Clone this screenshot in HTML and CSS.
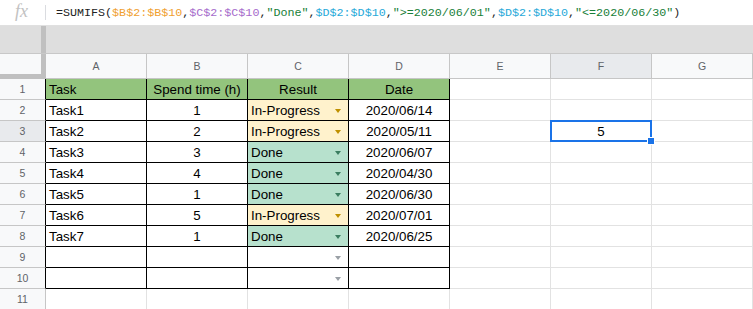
FILE: index.html
```html
<!DOCTYPE html>
<html lang="en">
<head>
    <meta charset="UTF-8">
    <title>SUMIFS - Sheet</title>
    <link rel="stylesheet" href="styles.css">
</head>
<body>
<div class="formula-bar">
    <span class="fx">fx</span>
    <span class="fx-sep"></span>
    <span class="formula">=SUMIFS(<span class="r1">$B$2:$B$10</span>,<span class="r2">$C$2:$C$10</span>,<span class="str">"Done"</span>,<span class="r3">$D$2:$D$10</span>,<span class="str">"&gt;=2020/06/01"</span>,<span class="r3">$D$2:$D$10</span>,<span class="str">"&lt;=2020/06/30"</span>)</span>
</div>
<div class="band"><div class="band-handle"></div></div>

<div class="sheet">
    <!-- column headers -->
    <div class="corner"></div>
    <div class="ch">A</div>
    <div class="ch">B</div>
    <div class="ch">C</div>
    <div class="ch">D</div>
    <div class="ch">E</div>
    <div class="ch active">F</div>
    <div class="ch">G</div>

    <!-- row 1 -->
    <div class="rh edge">1</div>
    <div class="cell t hd">Task</div>
    <div class="cell t hd c">Spend time (h)</div>
    <div class="cell t hd c">Result</div>
    <div class="cell t hd c">Date</div>
    <div class="cell"></div><div class="cell"></div><div class="cell"></div>

    <!-- row 2 -->
    <div class="rh edge">2</div>
    <div class="cell t">Task1</div>
    <div class="cell t c">1</div>
    <div class="cell t dd ip">In-Progress<span class="arrow"></span></div>
    <div class="cell t c">2020/06/14</div>
    <div class="cell"></div><div class="cell"></div><div class="cell"></div>

    <!-- row 3 -->
    <div class="rh edge active">3</div>
    <div class="cell t">Task2</div>
    <div class="cell t c">2</div>
    <div class="cell t dd ip">In-Progress<span class="arrow"></span></div>
    <div class="cell t c">2020/05/11</div>
    <div class="cell"></div>
    <div class="cell c selected">5<span class="sel-box"><span class="sel-handle"></span></span></div>
    <div class="cell"></div>

    <!-- row 4 -->
    <div class="rh edge">4</div>
    <div class="cell t">Task3</div>
    <div class="cell t c">3</div>
    <div class="cell t dd done">Done<span class="arrow"></span></div>
    <div class="cell t c">2020/06/07</div>
    <div class="cell"></div><div class="cell"></div><div class="cell"></div>

    <!-- row 5 -->
    <div class="rh edge">5</div>
    <div class="cell t">Task4</div>
    <div class="cell t c">4</div>
    <div class="cell t dd done">Done<span class="arrow"></span></div>
    <div class="cell t c">2020/04/30</div>
    <div class="cell"></div><div class="cell"></div><div class="cell"></div>

    <!-- row 6 -->
    <div class="rh edge">6</div>
    <div class="cell t">Task5</div>
    <div class="cell t c">1</div>
    <div class="cell t dd done">Done<span class="arrow"></span></div>
    <div class="cell t c">2020/06/30</div>
    <div class="cell"></div><div class="cell"></div><div class="cell"></div>

    <!-- row 7 -->
    <div class="rh edge">7</div>
    <div class="cell t">Task6</div>
    <div class="cell t c">5</div>
    <div class="cell t dd ip">In-Progress<span class="arrow"></span></div>
    <div class="cell t c">2020/07/01</div>
    <div class="cell"></div><div class="cell"></div><div class="cell"></div>

    <!-- row 8 -->
    <div class="rh edge">8</div>
    <div class="cell t">Task7</div>
    <div class="cell t c">1</div>
    <div class="cell t dd done">Done<span class="arrow"></span></div>
    <div class="cell t c">2020/06/25</div>
    <div class="cell"></div><div class="cell"></div><div class="cell"></div>

    <!-- row 9 -->
    <div class="rh edge">9</div>
    <div class="cell t"></div>
    <div class="cell t"></div>
    <div class="cell t dd"><span class="arrow"></span></div>
    <div class="cell t"></div>
    <div class="cell"></div><div class="cell"></div><div class="cell"></div>

    <!-- row 10 -->
    <div class="rh edge">10</div>
    <div class="cell t"></div>
    <div class="cell t"></div>
    <div class="cell t dd"><span class="arrow"></span></div>
    <div class="cell t"></div>
    <div class="cell"></div><div class="cell"></div><div class="cell"></div>

    <!-- row 11 -->
    <div class="rh">11</div>
    <div class="cell"></div><div class="cell"></div><div class="cell"></div><div class="cell"></div>
    <div class="cell"></div><div class="cell"></div><div class="cell"></div>
</div>
</body>
</html>
```

FILE: styles.css
```css
body {
    margin: 0;
    font-family: "Liberation Sans", Arial, sans-serif;
    font-size: 13.33px;
    color: #000;
    background: #fff;
    overflow: hidden;
}

/* formula bar */
.formula-bar {
    height: 25px;
    border-bottom: 1px solid #e0e0e0;
    display: flex;
    align-items: center;
}
.fx {
    width: 30px;
    padding-left: 15px;
    box-sizing: border-box;
    font-family: "Liberation Serif", serif;
    font-style: italic;
    font-size: 18px;
    color: #c2c2c2;
    line-height: 18px;
    margin-top: -3px;
}
.fx-sep {
    width: 1px;
    height: 15px;
    margin-left: 15px;
    background: #dadce0;
}
.formula {
    margin-left: 10px;
    font-family: "Liberation Mono", "DejaVu Sans Mono", monospace;
    font-size: 11.7px;
    color: #222;
    white-space: nowrap;
}
.r1 { color: #f0a030; }
.r2 { color: #a66bcb; }
.r3 { color: #27a9d9; }
.str { color: #188038; }

/* gray strip above the headers */
.band {
    height: 27px;
    background: #dedede;
    border-bottom: 1px solid #c8c8c8;
}
.band-handle {
    margin-left: 41px;
    width: 5px;
    height: 100%;
    background: #c0c0c0;
}

/* grid */
.sheet {
    display: grid;
    grid-template-columns: 46px repeat(6, 101px) 1fr;
    grid-template-rows: 25px repeat(11, 21px);
}
.sheet > div {
    box-sizing: border-box;
    border-right: 1px solid #e2e2e2;
    border-bottom: 1px solid #e2e2e2;
}

.corner {
    background: #f8f9fa;
    border-right: 5px solid #c0c0c0 !important;
    border-bottom: 5px solid #c0c0c0 !important;
}
.ch, .rh {
    background: #f8f9fa;
    color: #5f6368;
    font-size: 10.5px;
    display: flex;
    align-items: center;
    justify-content: center;
}
.sheet > .ch,
.sheet > .rh {
    border-color: #c6c6c6;
}
.ch.active, .rh.active {
    background: #e8eaed;
}
.sheet > .rh.edge {
    border-right-color: #000;
}

.cell {
    display: flex;
    align-items: flex-end;
    padding: 0 3px 2px;
    line-height: 15px;
    white-space: nowrap;
    overflow: hidden;
}
.cell.c {
    justify-content: center;
}
.sheet > .t {
    border-right-color: #000;
    border-bottom-color: #000;
}
.hd { background: #93c47d; }
.ip { background: #fff2cc; }
.done { background: #b7e1cd; }

/* dropdown chip arrow */
.arrow {
    width: 0;
    height: 0;
    border-left: 3px solid transparent;
    border-right: 3px solid transparent;
    border-top: 4px solid #9aa0a6;
    align-self: center;
    margin: 3px 4px 0 auto;
}
.ip .arrow { border-top-color: #bf9000; }
.done .arrow { border-top-color: #3b7d60; }

/* selected cell */
.selected {
    position: relative;
    overflow: visible;
}
.sel-box {
    position: absolute;
    top: -1px;
    left: -1px;
    right: -1px;
    bottom: -1px;
    border: 2px solid #1a73e8;
}
.sel-handle {
    position: absolute;
    right: -5px;
    bottom: -5px;
    width: 6px;
    height: 6px;
    background: #1a73e8;
    border: 1px solid #fff;
}
```
